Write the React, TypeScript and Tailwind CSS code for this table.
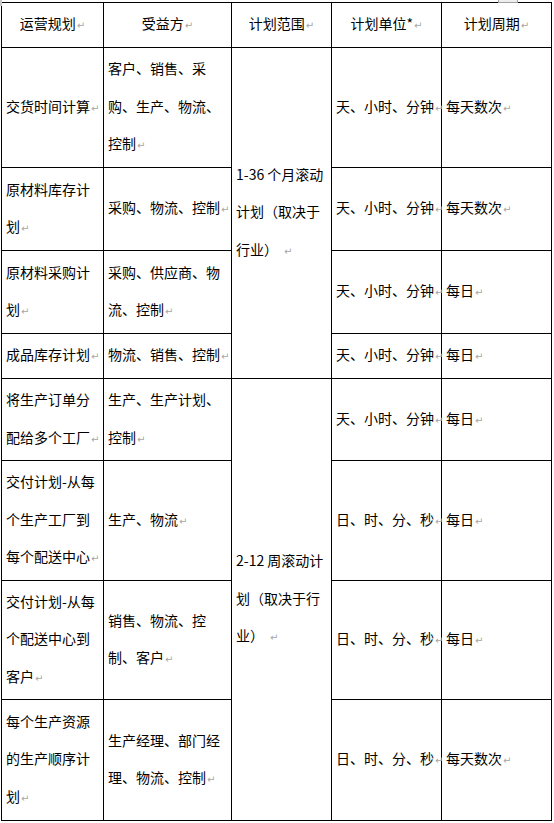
import React from "react";

const Mark = ({ space = false }: { space?: boolean }) => (
  <span
    className={`text-[10px] text-[#a6a6a6] ${space ? "ml-[6px]" : "ml-[1px]"}`}
    style={{ fontFamily: '"DejaVu Sans", sans-serif' }}
  >
    ↵
  </span>
);

const Lines = ({ lines, space = false }: { lines: string[]; space?: boolean }) => (
  <>
    {lines.map((l, i) => (
      <div key={i} className="whitespace-nowrap">
        {l}
        {i === lines.length - 1 && <Mark space={space} />}
      </div>
    ))}
  </>
);

const td = "border border-black px-[4px] py-0 align-middle text-left";
const th = "border border-black px-[4px] py-0 align-middle text-center font-normal";

type Row = {
  h: string;
  a: string[];
  b: string[];
  c?: { lines: string[]; span: number };
  d: string;
  e: string;
};

const rows: Row[] = [
  {
    h: "h-[120px]",
    a: ["交货时间计算"],
    b: ["客户、销售、采", "购、生产、物流、", "控制"],
    c: { lines: ["1-36 个月滚动", "计划（取决于", "行业）"], span: 4 },
    d: "天、小时、分钟",
    e: "每天数次",
  },
  { h: "h-[83px]", a: ["原材料库存计", "划"], b: ["采购、物流、控制"], d: "天、小时、分钟", e: "每天数次" },
  { h: "h-[83px]", a: ["原材料采购计", "划"], b: ["采购、供应商、物", "流、控制"], d: "天、小时、分钟", e: "每日" },
  { h: "h-[45px]", a: ["成品库存计划"], b: ["物流、销售、控制"], d: "天、小时、分钟", e: "每日" },
  {
    h: "h-[82px]",
    a: ["将生产订单分", "配给多个工厂"],
    b: ["生产、生产计划、", "控制"],
    c: { lines: ["2-12 周滚动计", "划（取决于行", "业）"], span: 4 },
    d: "天、小时、分钟",
    e: "每日",
  },
  { h: "h-[120px]", a: ["交付计划-从每", "个生产工厂到", "每个配送中心"], b: ["生产、物流"], d: "日、时、分、秒", e: "每日" },
  { h: "h-[119px]", a: ["交付计划-从每", "个配送中心到", "客户"], b: ["销售、物流、控", "制、客户"], d: "日、时、分、秒", e: "每日" },
  { h: "h-[121px]", a: ["每个生产资源", "的生产顺序计", "划"], b: ["生产经理、部门经", "理、物流、控制"], d: "日、时、分、秒", e: "每天数次" },
];

export default function App() {
  return (
    <div
      className="relative bg-white w-[554px] h-[823px] overflow-hidden text-black text-[14px] leading-[37.5px]"
      style={{ fontFamily: '"Noto Sans CJK SC", "Noto Sans", sans-serif' }}
    >
      <div className="pt-[2px] pl-[1px]">
        <table className="border-collapse table-fixed w-[551px]">
          <colgroup>
            <col className="w-[102px]" />
            <col className="w-[128px]" />
            <col className="w-[100px]" />
            <col className="w-[110px]" />
            <col className="w-[110px]" />
          </colgroup>
          <thead>
            <tr className="h-[45px]">
              <th className={th}>运营规划<Mark /></th>
              <th className={th}>受益方<Mark /></th>
              <th className={th}>计划范围<Mark /></th>
              <th className={th}>计划单位*<Mark /></th>
              <th className={th}>计划周期<Mark /></th>
            </tr>
          </thead>
          <tbody>
            {rows.map((r, i) => (
              <tr key={i} className={r.h}>
                <td className={td}>
                  <Lines lines={r.a} />
                </td>
                <td className={td}>
                  <Lines lines={r.b} />
                </td>
                {r.c && (
                  <td className={td} rowSpan={r.c.span}>
                    <Lines lines={r.c.lines} space />
                  </td>
                )}
                <td className={td}>
                  <Lines lines={[r.d]} />
                </td>
                <td className={td}>
                  <Lines lines={[r.e]} />
                </td>
              </tr>
            ))}
          </tbody>
        </table>
      </div>
      <div className="absolute left-0 top-0 z-10 w-[2px] h-[6px] bg-[#c8c8c8]" />
      <div className="absolute left-[498px] top-0 z-10 w-[20px] h-[3px] border-x border-b border-[#a0a0a0] bg-[#eeeeee]" />
    </div>
  );
}
